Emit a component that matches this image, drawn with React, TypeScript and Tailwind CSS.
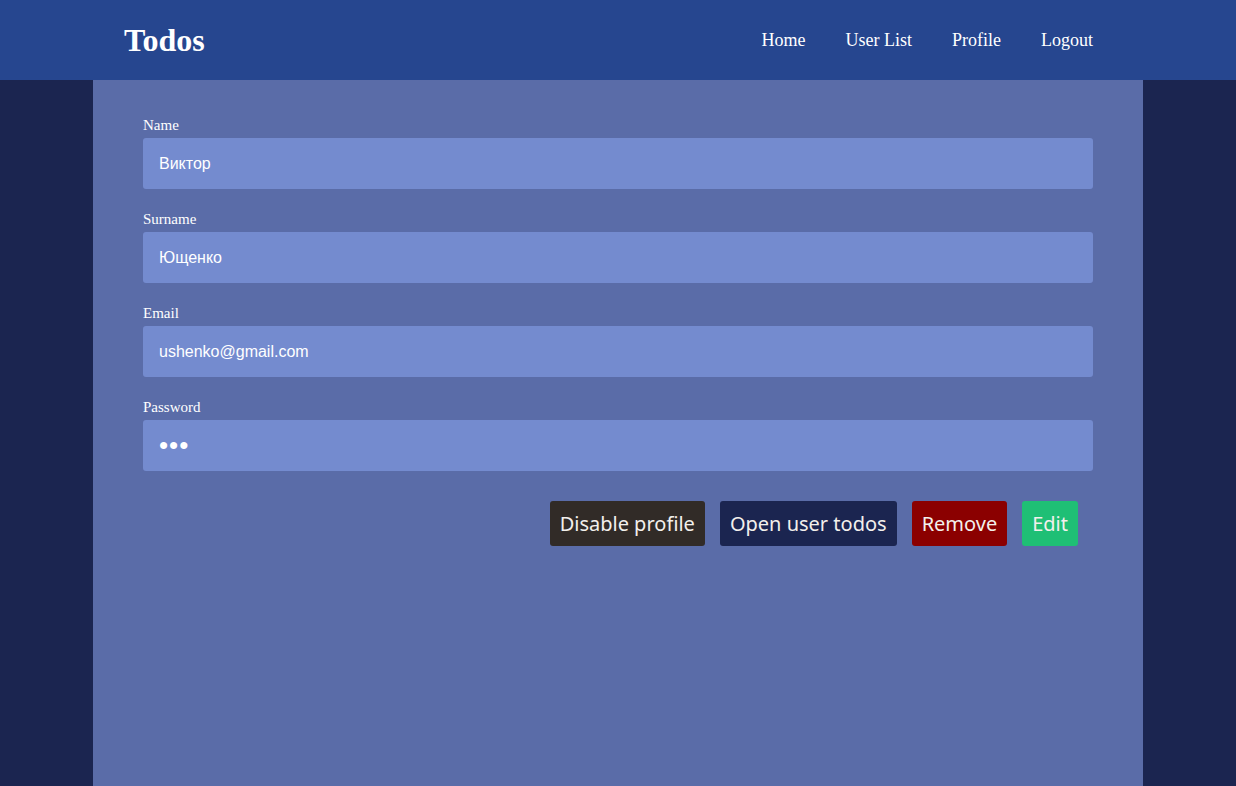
import React from 'react';

const fields = [
  { label: 'Name', value: 'Виктор', type: 'text' },
  { label: 'Surname', value: 'Ющенко', type: 'text' },
  { label: 'Email', value: 'ushenko@gmail.com', type: 'text' },
  { label: 'Password', value: '123', type: 'password' },
];

const buttons = [
  { text: 'Disable profile', cls: 'bg-[#312b27]' },
  { text: 'Open user todos', cls: 'bg-[#1b2550]' },
  { text: 'Remove', cls: 'bg-[#8b0000]' },
  { text: 'Edit', cls: 'bg-[#1fbf75]' },
];

export default function App() {
  return (
    <div className="min-h-screen bg-[#1b2550] flex flex-col font-['Liberation_Serif',serif]">
      <header className="h-[80px] bg-[#26468f] shrink-0">
        <div className="w-[1050px] mx-auto h-full flex items-center justify-between pl-[31px] pr-[50px] text-white">
          <span className="text-[32px] font-bold leading-none">Todos</span>
          <nav className="flex gap-[40px] text-[18px]">
            <a>Home</a>
            <a>User List</a>
            <a>Profile</a>
            <a>Logout</a>
          </nav>
        </div>
      </header>
      <main className="w-[1050px] mx-auto flex-1 bg-[#5a6ca8] px-[50px] pt-[38px] min-h-[706px]">
        <form className="flex flex-col gap-[23px]">
          {fields.map((f) => (
            <div key={f.label} className="flex flex-col">
              <label className="text-white text-[15px] leading-[20px] h-[23px] -mt-[3px]">{f.label}</label>
              <input
                type={f.type}
                defaultValue={f.value}
                className={`h-[51px] rounded-[3px] bg-[#748bcf] px-[16px] text-white font-['Liberation_Sans',sans-serif] outline-none ${
                  f.type === 'password' ? 'text-[26px] tracking-[1px]' : 'text-[16px]'
                }`}
              />
            </div>
          ))}
        </form>
        <div className="flex justify-end gap-[15px] pr-[15px] mt-[30px]">
          {buttons.map((b) => (
            <button
              key={b.text}
              className={`${b.cls} h-[45px] px-[10px] rounded-[3px] text-[#f3f0ec] text-[20px] font-['Noto_Sans',sans-serif]`}
            >
              {b.text}
            </button>
          ))}
        </div>
      </main>
    </div>
  );
}
